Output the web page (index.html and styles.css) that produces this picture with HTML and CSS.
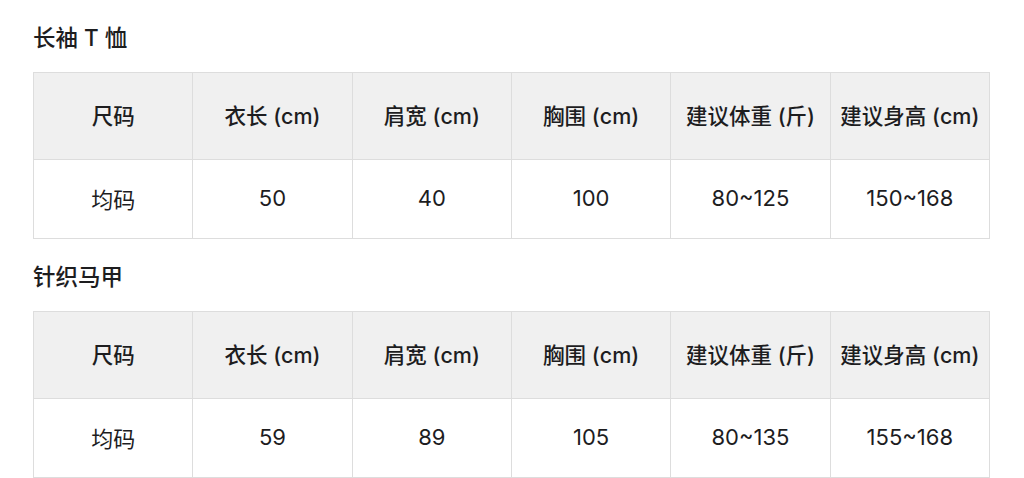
FILE: index.html
```html
<!DOCTYPE html>
<html lang="zh">
<head>
<meta charset="utf-8">
<link rel="stylesheet" href="styles.css">
</head>
<body>
<div class="page">
  <section class="block">
    <h2 class="title">长袖 T 恤</h2>
    <table class="size-table">
      <thead>
        <tr><th>尺码</th><th>衣长 (cm)</th><th>肩宽 (cm)</th><th>胸围 (cm)</th><th>建议体重 (斤)</th><th>建议身高 (cm)</th></tr>
      </thead>
      <tbody>
        <tr><td>均码</td><td>50</td><td>40</td><td>100</td><td>80~125</td><td>150~168</td></tr>
      </tbody>
    </table>
  </section>
  <section class="block">
    <h2 class="title">针织马甲</h2>
    <table class="size-table">
      <thead>
        <tr><th>尺码</th><th>衣长 (cm)</th><th>肩宽 (cm)</th><th>胸围 (cm)</th><th>建议体重 (斤)</th><th>建议身高 (cm)</th></tr>
      </thead>
      <tbody>
        <tr><td>均码</td><td>59</td><td>89</td><td>105</td><td>80~135</td><td>155~168</td></tr>
      </tbody>
    </table>
  </section>
</div>
</body>
</html>
```

FILE: styles.css
```css
html, body {
  margin: 0;
  padding: 0;
  background: #fff;
}
body {
  font-family: "Inter", "Noto Sans CJK SC", sans-serif;
  color: #1d1d1f;
}
.page {
  padding: 0 0 0 33px;
}
.block {
  display: flex;
  flex-direction: column;
}
.title {
  margin: 24px 0 20px 0;
  font-size: 22.5px;
  line-height: 28px;
  font-weight: 500;
}
.size-table {
  border-collapse: collapse;
  width: 957px;
  table-layout: fixed;
  font-size: 21.5px;
}
.size-table th,
.size-table td {
  border: 1px solid #dddddd;
  text-align: center;
  padding: 0;
  font-weight: 400;
}
.size-table th {
  background: #f0f0f0;
  height: 82px;
  padding-bottom: 4px;
  font-weight: 500;
}
.size-table td {
  height: 76px;
  padding-bottom: 2px;
  font-size: 22px;
}
```
